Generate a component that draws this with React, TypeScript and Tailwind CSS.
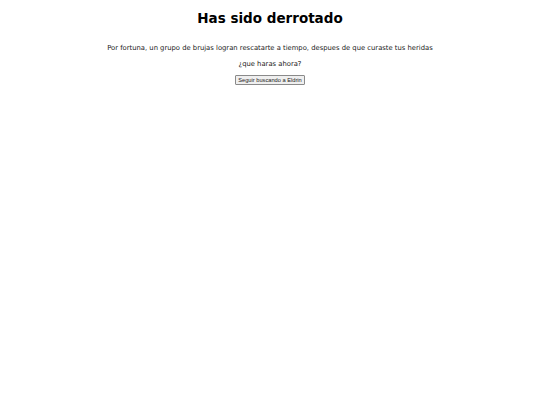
export default function App() {
  return (
    <div className="flex min-h-[405px] flex-col items-center bg-white text-center font-['DejaVu_Sans',sans-serif] text-black">
      <h1 className="mt-[9.5px] text-[13.5px] font-bold leading-[normal]">Has sido derrotado</h1>
      <p className="mt-[18px] text-[6.8px] leading-[normal] text-[#1a1a1a]">
        Por fortuna, un grupo de brujas logran rescatarte a tiempo, despues de que curaste tus heridas
      </p>
      <p className="mt-[8px] text-[6.8px] leading-[normal] text-[#1a1a1a]">¿que haras ahora?</p>
      <button className="mt-[7px] rounded-[1px] border border-[#8a8a8a] bg-[#efefef] px-[2.5px] py-[1px] font-['Liberation_Sans',sans-serif] text-[5.7px] leading-[normal] text-[#222]">
        Seguir buscando a Eldrin
      </button>
    </div>
  );
}
